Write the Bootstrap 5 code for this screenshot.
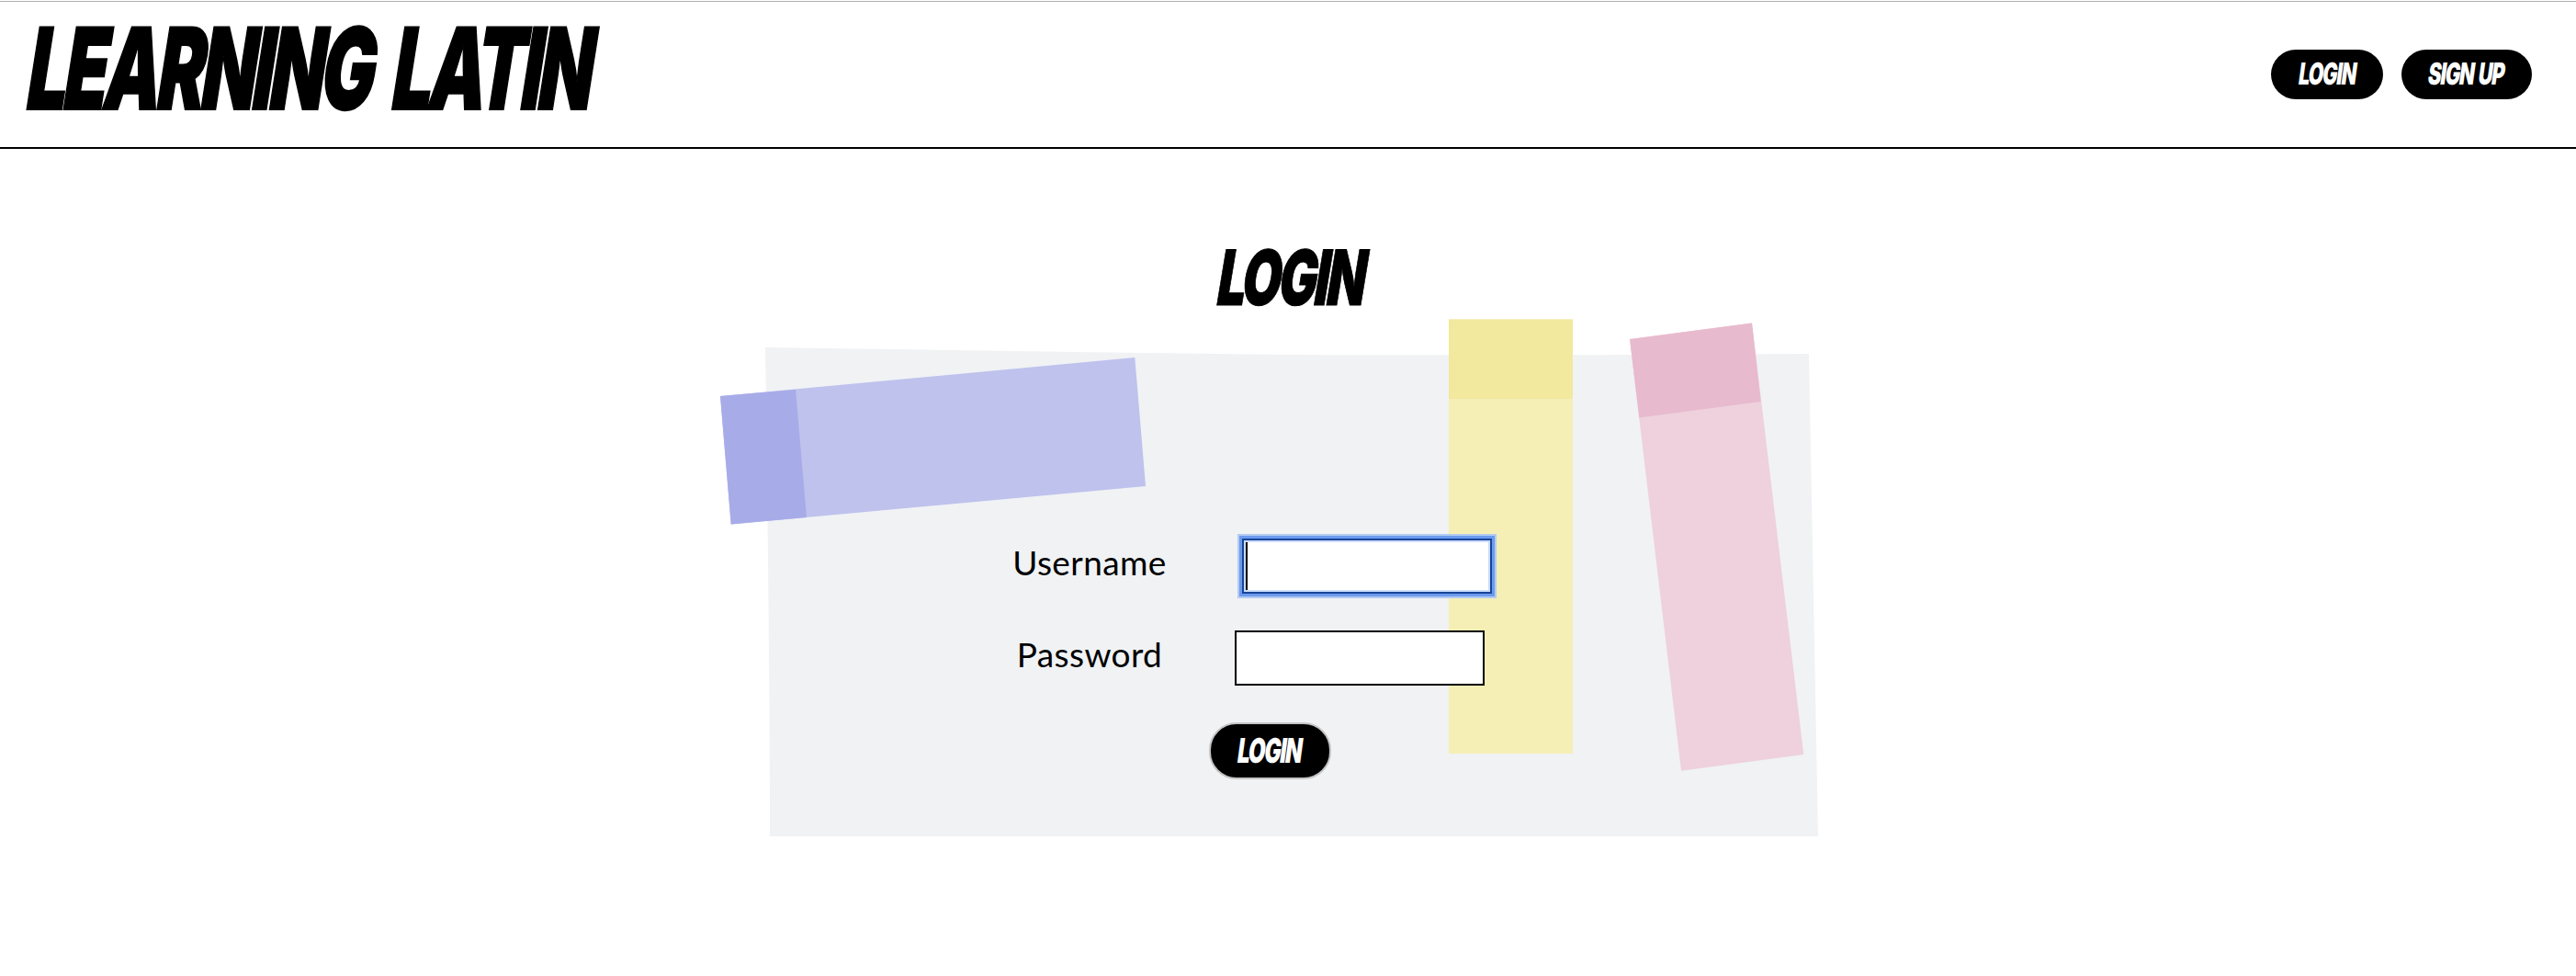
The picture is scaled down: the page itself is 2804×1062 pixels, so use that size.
<!DOCTYPE html>
<html lang="en">
<head>
<meta charset="utf-8">
<title>Learning Latin</title>
<link href="https://cdn.jsdelivr.net/npm/bootstrap@5.3.0/dist/css/bootstrap.min.css" rel="stylesheet">
<style>
body{background:#fff;color:#000;overflow:hidden}
.topline{height:1px;margin-top:1px;background:#b0b0b0}
.site-header{height:160px;border-bottom:2px solid #000;padding:0 48px 0 26px}
.comic{font-family:Inter,"Liberation Sans",sans-serif;font-weight:900;white-space:nowrap;text-transform:uppercase;letter-spacing:-.05em}
.comic span{display:inline-block;transform-origin:50% 50%}
.brand{width:625px;height:120px;margin-top:13px;font-size:123px;line-height:120px;-webkit-text-stroke:2px #000}
.brand span{transform:scaleX(.632) skewX(-14deg);word-spacing:.14em}
.pill{height:54px;border-radius:27px;background:#000;color:#fff;border:0;padding:0;font-size:33px;line-height:53px}
.pill span{transform:scaleX(.65) skewX(-12deg)}
.pill-login{width:122px}
.pill-signup{width:142px}
.pill-signup span{transform:scaleX(.66) skewX(-12deg);word-spacing:.08em}
.nav-pills-row{gap:20px;margin-top:52px}
.page-title{width:166px;height:90px;margin:95px 0 0 1323px;font-size:83px;line-height:91px;-webkit-text-stroke:1px #000}
.page-title span{transform:scaleX(.665) skewX(-14deg)}
.board{width:1200px;height:570px;margin:-5px 0 0 782px}
.board>svg{left:0;top:0;z-index:0}
.login-form{z-index:1;padding-top:244px}
.field{height:60px}
.field+.field{margin-top:40px}
.field label{width:210px;margin-left:299px;text-align:center;font-family:Lato,sans-serif;font-size:37px;letter-spacing:.4px;line-height:52px;height:60px}
.field .entry{height:60px;width:272px;border:2px solid #000;border-radius:0;background:#fff;padding:2px}
.entry-user{margin-left:61px}
.field .entry-user{border-color:#174499;box-shadow:0 0 0 3px #6c9bed,0 0 0 5px #b4cbf1,inset 0 0 0 2px #cbdcfb}
.caret{width:2px;height:52px;background:#000}
.entry-pass{margin-left:53px}
.submit{width:133px;height:62px;margin:40px 0 0 534px;border:2px solid #c4c4c5;border-radius:30px;font-size:37px;line-height:58px}
</style>
<script src="https://cdn.jsdelivr.net/npm/bootstrap@5.3.0/dist/js/bootstrap.bundle.min.js"></script>
</head>
<body>
<div class="topline"></div>
<header class="site-header d-flex justify-content-between align-items-start">
  <h1 class="comic brand mb-0 d-flex justify-content-center"><span>Learning Latin</span></h1>
  <nav class="nav-pills-row d-flex">
    <a class="btn comic pill pill-login d-flex justify-content-center" href="#"><span>Login</span></a>
    <a class="btn comic pill pill-signup d-flex justify-content-center" href="#"><span>Sign up</span></a>
  </nav>
</header>
<main>
  <h2 class="comic page-title d-flex justify-content-center"><span>Login</span></h2>
  <section class="board position-relative">
    <svg class="position-absolute" width="1200" height="570" viewBox="782 342 1200 570" aria-hidden="true">
      <path fill="#f0f2f4" d="M833 378Q1230 384 1400 386Q1660 387 1969 385L1979 910H838Q838 720 833 378Z"/>
      <path fill="#bec2ed" d="M784 431L1235.300 389L1247 529L795.700 570.500Z"/>
      <path fill="#a7abe8" d="M784 431L866 424L878 563L795.700 570.500Z"/>
      <path fill="#f5efb6" d="M1577 347.500H1712V820H1577Z"/>
      <path fill="#f2e89e" d="M1577 347.500H1712V434H1577Z"/>
      <path fill="#eed1dc" d="M1774 369L1907 351.500L1963.300 821L1830 838.700Z"/>
      <path fill="#e8bace" d="M1774 369L1907 351.500L1916.700 437L1784.300 454.500Z"/>
    </svg>
    <form class="login-form position-relative">
      <div class="field d-flex">
        <label>Username</label>
        <div class="entry entry-user" role="textbox"><div class="caret"></div></div>
      </div>
      <div class="field d-flex">
        <label>Password</label>
        <div class="entry entry-pass" role="textbox"></div>
      </div>
      <button type="button" class="btn comic pill submit d-flex justify-content-center"><span>Login</span></button>
    </form>
  </section>
</main>
</body>
</html>
